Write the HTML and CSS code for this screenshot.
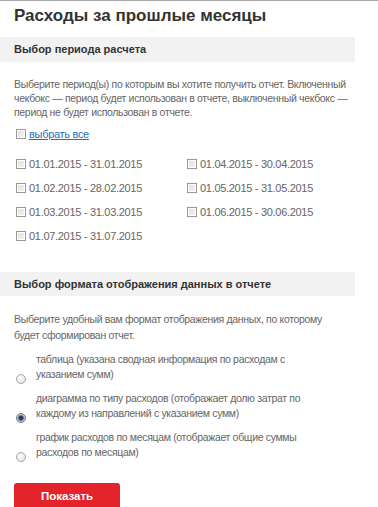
FILE: index.html
```html
<!DOCTYPE html>
<html lang="ru">
<head>
<meta charset="utf-8">
<title>Расходы за прошлые месяцы</title>
<link rel="stylesheet" href="styles.css">
</head>
<body>
<div class="page">
  <div class="content">
    <h1 class="title">Расходы за прошлые месяцы</h1>

    <div class="section-head">Выбор периода расчета</div>
    <p class="note">Выберите период(ы) по которым вы хотите получить отчет. Включенный чекбокс — период будет использован в отчете, выключенный чекбокс — период не будет использован в отчете.</p>

    <div class="select-all"><span class="cb"></span><a href="#" class="link">выбрать все</a></div>

    <div class="periods">
      <div class="period"><span class="cb"></span>01.01.2015 - 31.01.2015</div>
      <div class="period"><span class="cb"></span>01.04.2015 - 30.04.2015</div>
      <div class="period"><span class="cb"></span>01.02.2015 - 28.02.2015</div>
      <div class="period"><span class="cb"></span>01.05.2015 - 31.05.2015</div>
      <div class="period"><span class="cb"></span>01.03.2015 - 31.03.2015</div>
      <div class="period"><span class="cb"></span>01.06.2015 - 30.06.2015</div>
      <div class="period"><span class="cb"></span>01.07.2015 - 31.07.2015</div>
    </div>

    <div class="section-head second">Выбор формата отображения данных в отчете</div>
    <p class="note note2">Выберите удобный вам формат отображения данных, по которому будет сформирован отчет.</p>

    <div class="options">
      <div class="option"><span class="radio"></span><span class="opt-text">таблица (указана сводная информация по расходам с указанием сумм)</span></div>
      <div class="option"><span class="radio checked"></span><span class="opt-text">диаграмма по типу расходов (отображает долю затрат по каждому из направлений с указанием сумм)</span></div>
      <div class="option"><span class="radio"></span><span class="opt-text">график расходов по месяцам (отображает общие суммы расходов по месяцам)</span></div>
    </div>

    <div class="actions"><button class="btn">Показать</button></div>
  </div>
</div>
</body>
</html>
```
FILE: styles.css
```css
html, body {
  margin: 0;
  padding: 0;
  background: #fff;
}
body {
  font-family: "Liberation Sans", Arial, sans-serif;
  color: #666;
}
.page {
  border-top: 1px solid #a8a8a8;
}
.content {
  width: 355px;
}
.title {
  margin: 0;
  padding: 3px 14px 0;
  font-size: 17px;
  line-height: 24px;
  font-weight: bold;
  color: #333;
}
.section-head {
  margin-top: 9px;
  height: 25px;
  line-height: 25px;
  padding-left: 14px;
  background: #f2f2f2;
  font-size: 11px;
  font-weight: bold;
  color: #333;
}
.section-head.second {
  margin-top: 29px;
  height: 24px;
  line-height: 24px;
}
.note {
  margin: 15px 0 0;
  padding: 0 0 0 14px;
  font-size: 10.5px;
  letter-spacing: -0.33px;
  line-height: 14px;
  color: #666;
}
.note2 {
  margin-top: 15px;
  padding-right: 10px;
  line-height: 16px;
}
.select-all {
  margin-top: 8px;
  padding-left: 16px;
  display: flex;
  align-items: center;
  height: 14px;
  font-size: 11px;
  letter-spacing: -0.3px;
}
.link {
  color: #2d6db4;
  text-decoration: underline;
}
.cb {
  display: inline-block;
  box-sizing: border-box;
  width: 10px;
  height: 10px;
  border: 1px solid #9a9a9a;
  background: linear-gradient(135deg, #dcdcdc, #f8f8f8);
  box-shadow: inset 0 0 0 1px #fff;
  margin-right: 3px;
  flex: none;
}
.periods {
  margin-top: 16px;
  padding-left: 16px;
  display: grid;
  grid-template-columns: 171px 1fr;
  row-gap: 10px;
}
.period {
  display: flex;
  align-items: center;
  height: 14px;
  font-size: 11px;
  letter-spacing: -0.3px;
  color: #666;
}
.options {
  margin-top: 9px;
  display: flex;
  flex-direction: column;
  gap: 9px;
}
.option {
  display: flex;
  align-items: flex-end;
  padding-left: 16px;
}
.radio {
  display: inline-block;
  box-sizing: border-box;
  width: 10px;
  height: 10px;
  border-radius: 50%;
  border: 1px solid #a8a8a8;
  background: radial-gradient(circle at 40% 40%, #fff, #dcdcdc);
  margin-right: 10px;
  margin-bottom: -2px;
  flex: none;
}
.radio.checked {
  border-color: #6b7d93;
  background: radial-gradient(circle, #2b3e57 0 2px, #9fb0c4 3px, #e6edf4 5px);
}
.opt-text {
  width: 282px;
  font-size: 10.5px;
  letter-spacing: -0.33px;
  line-height: 15px;
  color: #666;
}
.actions {
  margin-top: 23px;
  padding-left: 14px;
}
.btn {
  display: block;
  width: 106px;
  height: 26px;
  border: none;
  border-radius: 3px 3px 0 0;
  background: #e5232a;
  color: #fff;
  font-family: "Liberation Sans", Arial, sans-serif;
  font-size: 11.5px;
  font-weight: bold;
  padding: 0;
}
```
